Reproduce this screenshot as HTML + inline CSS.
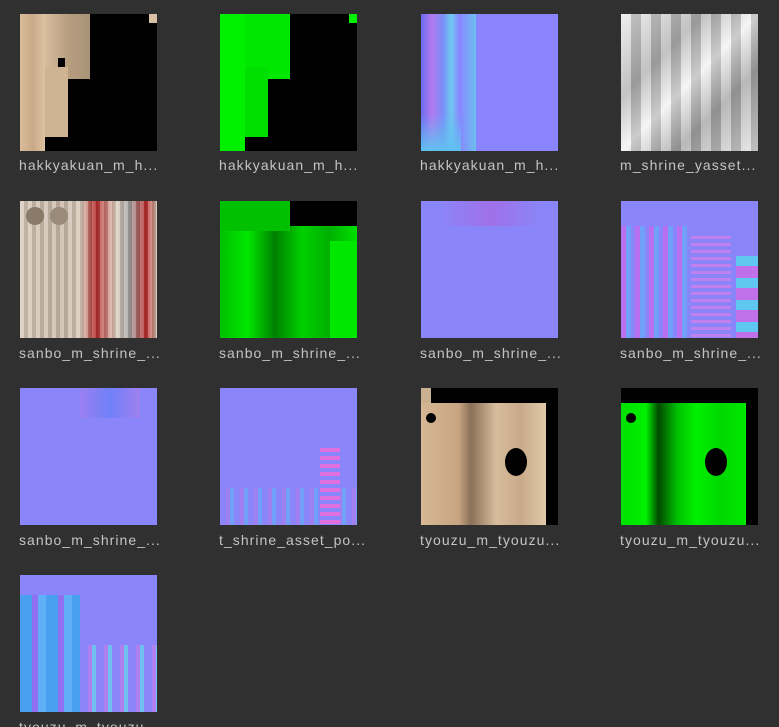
<!DOCTYPE html>
<html><head><meta charset="utf-8"><style>
html,body{margin:0;padding:0;background:#303030;width:779px;height:727px;overflow:hidden;position:relative;font-family:"Liberation Sans",sans-serif}
.t{position:absolute;width:137px;height:137px;overflow:hidden}
.l{position:absolute;color:#c4c4c4;font-size:14px;letter-spacing:1.05px;white-space:nowrap}
.t div{position:absolute}
</style></head><body>
<!-- row1 -->
<div class="t" style="left:20px;top:14px;background:#000">
 <div style="left:0;top:0;width:25px;height:137px;background:linear-gradient(90deg,#d9bd9c,#c9a987,#dcc2a3)"></div>
 <div style="left:25px;top:0;width:45px;height:65px;background:linear-gradient(90deg,#d8be9e,#b89e80 50%,#a89378)"></div>
 <div style="left:25px;top:53px;width:23px;height:70px;background:#cfb494"></div>
 <div style="left:129px;top:0;width:8px;height:9px;background:#d9c2a4"></div>
 <div style="left:38px;top:44px;width:7px;height:9px;background:#000"></div>
</div>
<div class="t" style="left:220px;top:14px;background:#000">
 <div style="left:0;top:0;width:25px;height:137px;background:#00f000"></div>
 <div style="left:25px;top:0;width:45px;height:65px;background:#00e800"></div>
 <div style="left:25px;top:53px;width:23px;height:70px;background:#00e000"></div>
 <div style="left:129px;top:0;width:8px;height:9px;background:#00f000"></div>
</div>
<div class="t" style="left:421px;top:14px;background:#8a85ff">
 <div style="left:0;top:0;width:55px;height:137px;background:linear-gradient(90deg,#6a6cf0,#b27af0 20%,#7a8ef8 40%,#70c8f0 55%,#8a85ff 70%,#6cc0f0)"></div>
 <div style="left:0;top:100px;width:40px;height:37px;background:linear-gradient(180deg,transparent,#60c0f0)"></div>
</div>
<div class="t" style="left:621px;top:14px;background:linear-gradient(135deg,#e8e8e8,#a8a8a8 30%,#f0f0f0 50%,#9a9a9a 70%,#e0e0e0)">
 <div style="left:0;top:0;width:137px;height:137px;background:repeating-linear-gradient(90deg,rgba(255,255,255,.3) 0 10px,rgba(120,120,120,.3) 10px 20px)"></div>
</div>
<div class="l" style="left:19px;top:157px">hakkyakuan_m_h...</div>
<div class="l" style="left:219px;top:157px">hakkyakuan_m_h...</div>
<div class="l" style="left:420px;top:157px">hakkyakuan_m_h...</div>
<div class="l" style="left:620px;top:157px">m_shrine_yasset...</div>
<!-- row2 -->
<div class="t" style="left:20px;top:201px;background:linear-gradient(90deg,#d8c8b8,#c8b8a8 30%,#d8c8b8 45%,#b02020 55%,#e0d0c0 70%,#a0a0a0 80%,#b82828 92%,#d0c0b0)">
 <div style="left:0;top:0;width:137px;height:137px;background:repeating-linear-gradient(90deg,rgba(255,255,255,.2) 0 4px,rgba(0,0,0,.1) 4px 8px)"></div>
 <div style="left:6px;top:6px;width:18px;height:18px;border-radius:50%;background:#8a7a6a"></div>
 <div style="left:30px;top:6px;width:18px;height:18px;border-radius:50%;background:#9a8a7a"></div>
</div>
<div class="t" style="left:220px;top:201px;background:#000">
 <div style="left:0;top:25px;width:137px;height:112px;background:linear-gradient(90deg,#00c000,#00e800 20%,#008000 40%,#00d000 60%,#00b000 80%,#00e000)"></div>
 <div style="left:0;top:0;width:70px;height:30px;background:#00c000"></div>
 <div style="left:110px;top:40px;width:27px;height:97px;background:#00e800"></div>
</div>
<div class="t" style="left:421px;top:201px;background:#8a85f8">
 <div style="left:20px;top:0;width:100px;height:25px;background:linear-gradient(90deg,#8a85f8,#a070e8,#8a85f8)"></div>
</div>
<div class="t" style="left:621px;top:201px;background:#8a85f8">
 <div style="left:0;top:25px;width:70px;height:112px;background:repeating-linear-gradient(90deg,#b870f0 0 5px,#70a0f8 5px 10px,#8a85f8 10px 14px)"></div>
 <div style="left:70px;top:35px;width:40px;height:102px;background:repeating-linear-gradient(180deg,#c080f0 0 3px,#8a85f8 3px 7px)"></div>
 <div style="left:115px;top:55px;width:22px;height:82px;background:repeating-linear-gradient(180deg,#60c8f0 0 10px,#c070e8 10px 22px)"></div>
</div>
<div class="l" style="left:19px;top:345px">sanbo_m_shrine_...</div>
<div class="l" style="left:219px;top:345px">sanbo_m_shrine_...</div>
<div class="l" style="left:420px;top:345px">sanbo_m_shrine_...</div>
<div class="l" style="left:620px;top:345px">sanbo_m_shrine_...</div>
<!-- row3 -->
<div class="t" style="left:20px;top:388px;background:#8a85f8">
 <div style="left:60px;top:0;width:60px;height:30px;background:linear-gradient(90deg,#9a80f0,#7080f8,#a080f0)"></div>
</div>
<div class="t" style="left:220px;top:388px;background:#8a85f8">
 <div style="left:0;top:100px;width:137px;height:37px;background:repeating-linear-gradient(90deg,#8a85f8 0 6px,#a080f0 6px 10px,#70a0f8 10px 14px)"></div>
 <div style="left:100px;top:60px;width:20px;height:77px;background:repeating-linear-gradient(180deg,#e070e0 0 4px,#8a85f8 4px 8px)"></div>
</div>
<div class="t" style="left:421px;top:388px;background:#000">
 <div style="left:0;top:15px;width:125px;height:122px;background:linear-gradient(90deg,#d6b894,#c8a482 30%,#8a7058 40%,#d8bc9c 60%,#c8aa8a 80%,#e0caa8)"></div>
 <div style="left:5px;top:25px;width:10px;height:10px;border-radius:50%;background:#000"></div>
 <div style="left:84px;top:60px;width:22px;height:28px;background:#000;border-radius:50%"></div>
 <div style="left:0;top:0;width:10px;height:15px;background:#c8b090"></div>
</div>
<div class="t" style="left:621px;top:388px;background:#000">
 <div style="left:0;top:15px;width:125px;height:122px;background:linear-gradient(90deg,#00e000,#00f000 20%,#004a00 30%,#00c000 45%,#00f000 60%,#00d800 80%,#00e800)"></div>
 <div style="left:84px;top:60px;width:22px;height:28px;background:#000;border-radius:50%"></div>
 <div style="left:5px;top:25px;width:10px;height:10px;border-radius:50%;background:#000"></div>
</div>
<div class="l" style="left:19px;top:532px">sanbo_m_shrine_...</div>
<div class="l" style="left:219px;top:532px">t_shrine_asset_po...</div>
<div class="l" style="left:420px;top:532px">tyouzu_m_tyouzu...</div>
<div class="l" style="left:620px;top:532px">tyouzu_m_tyouzu...</div>
<!-- row4 -->
<div class="t" style="left:20px;top:575px;background:#8a85f8">
 <div style="left:0;top:20px;width:60px;height:117px;background:repeating-linear-gradient(90deg,#4aa0f0 0 12px,#9070f0 12px 18px,#60b0f8 18px 26px)"></div>
 <div style="left:60px;top:70px;width:77px;height:67px;background:repeating-linear-gradient(90deg,#8a85f8 0 8px,#b080f0 8px 12px,#70c0f0 12px 16px)"></div>
</div>
<div class="l" style="left:19px;top:719px">tyouzu_m_tyouzu...</div>
</body></html>
